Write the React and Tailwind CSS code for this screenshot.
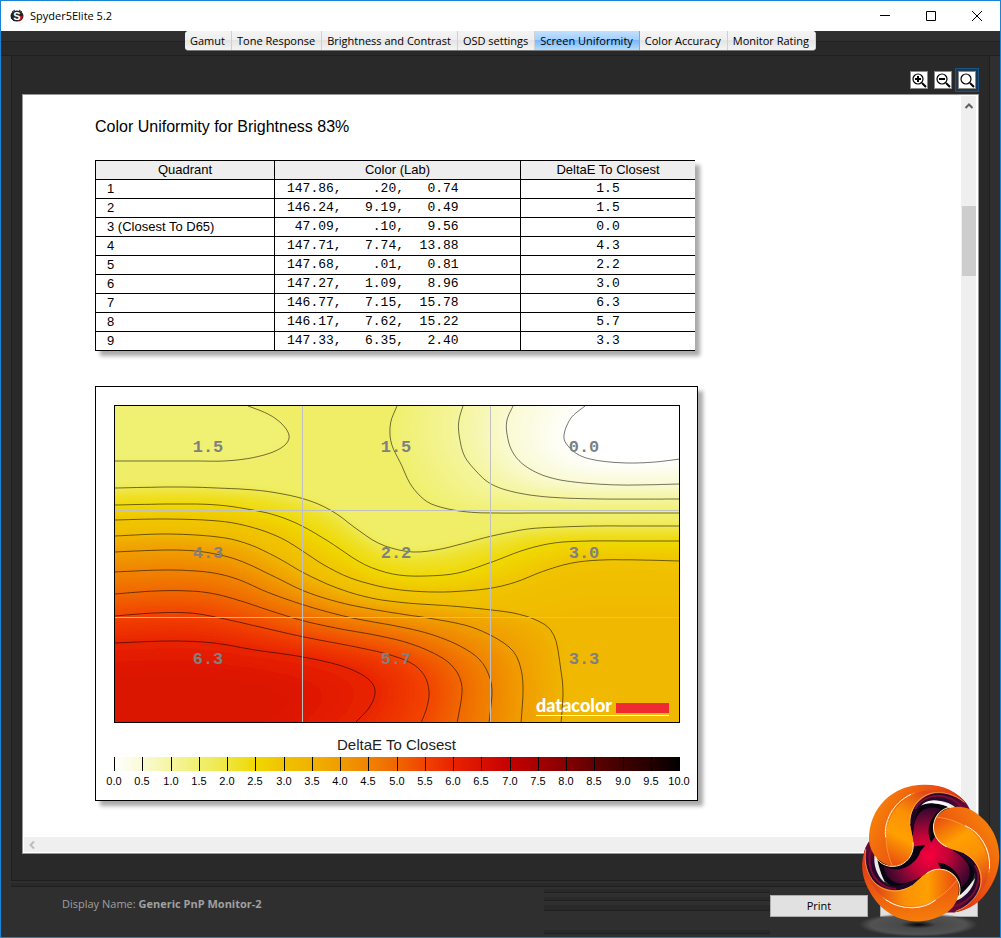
/**
 * Spyder5Elite report window, Screen Uniformity page.
 */

const TABS = ['Gamut', 'Tone Response', 'Brightness and Contrast', 'OSD settings', 'Screen Uniformity', 'Color Accuracy', 'Monitor Rating']

const ROWS = [
  ['1', '147.86,    .20,   0.74', '1.5'],
  ['2', '146.24,   9.19,   0.49', '1.5'],
  ['3 (Closest To D65)', ' 47.09,    .10,   9.56', '0.0'],
  ['4', '147.71,   7.74,  13.88', '4.3'],
  ['5', '147.68,    .01,   0.81', '2.2'],
  ['6', '147.27,   1.09,   8.96', '3.0'],
  ['7', '146.77,   7.15,  15.78', '6.3'],
  ['8', '146.17,   7.62,  15.22', '5.7'],
  ['9', '147.33,   6.35,   2.40', '3.3'],
]

// One colour for every 0.5 deltaE, 0 to 10
const SCALE = [
  [255, 255, 255], [250, 250, 214], [245, 245, 160], [240, 240, 112], [238, 230, 64], [240, 216, 0], [240, 194, 0],
  [240, 178, 0], [240, 156, 0], [240, 130, 0], [240, 102, 0], [242, 66, 0], [232, 34, 0], [216, 16, 0], [196, 0, 0],
  [166, 0, 0], [132, 0, 0], [94, 0, 0], [62, 0, 0], [36, 0, 0], [0, 0, 0],
]

// Contour lines on the 564 x 316 plot
const POCKET = [[0, 55], [40, 55], [80, 55], [109, 55], [136, 52], [158, 46], [171, 38], [174, 29], [167, 18], [153, 8], [133, 0]]
const COOL = [
  [1.5, [[282, 0], [276, 15], [275, 29], [278, 42], [286, 58], [296, 79], [311, 95], [329, 102], [353, 106], [379, 107], [430, 107], [500, 107], [565, 107]]],
  [1.0, [[348, 0], [344, 14], [344, 28], [349, 49], [361, 65], [376, 78], [399, 86], [433, 91], [486, 93], [565, 93]]],
  [0.5, [[398, 0], [392, 14], [392, 28], [397, 45], [409, 59], [430, 70], [459, 76], [506, 79], [565, 78]]],
  [0.0, [[470, 0], [456, 12], [449, 29], [453, 40], [466, 50], [486, 55], [513, 57], [540, 56], [565, 53]]],
]
const WARM = [
  [2.0, [[0, 82], [59, 81], [103, 82], [149, 85], [189, 93], [217, 105], [243, 124], [263, 137], [284, 144], [303, 146], [326, 143], [350, 137], [377, 130], [413, 123], [446, 121], [480, 120], [520, 120], [565, 120]]],
  [2.5, [[0, 99], [59, 98], [103, 99], [143, 105], [166, 111], [189, 121], [216, 137], [243, 155], [263, 164], [284, 169], [310, 170], [343, 167], [377, 156], [409, 144], [439, 137], [473, 135], [515, 135], [565, 135]]],
  [3.0, [[0, 114], [53, 113], [103, 115], [136, 121], [166, 132], [189, 146], [209, 159], [233, 171], [259, 179], [286, 184], [319, 186], [349, 185], [377, 182], [401, 176], [429, 165], [457, 157], [486, 154], [525, 154], [565, 155]]],
]
const HOT = [
  [3.5, [[0, 130], [53, 128], [103, 131], [133, 138], [163, 152], [189, 167], [222, 182], [256, 192], [292, 197], [336, 200], [377, 204], [403, 208], [421, 214], [434, 222], [441, 235], [445, 258], [448, 285], [446, 317]]],
  [4.0, [[0, 146], [53, 144], [89, 146], [123, 154], [156, 169], [189, 185], [223, 196], [256, 203], [286, 208], [319, 213], [353, 220], [379, 231], [398, 245], [406, 263], [408, 285], [406, 317]]],
  [4.5, [[0, 166], [50, 164], [92, 166], [122, 173], [152, 186], [189, 199], [233, 211], [286, 221], [315, 228], [343, 239], [363, 252], [373, 267], [377, 285], [374, 317]]],
  [5.0, [[0, 188], [40, 185], [75, 185], [100, 188], [126, 195], [156, 205], [189, 215], [226, 223], [260, 229], [290, 236], [314, 245], [333, 256], [344, 270], [347, 287], [342, 317]]],
  [5.5, [[0, 210], [40, 207], [75, 207], [105, 212], [145, 221], [189, 231], [236, 240], [272, 248], [296, 257], [309, 269], [314, 285], [312, 301], [306, 317]]],
  [6.0, [[0, 237], [56, 235], [99, 237], [140, 244], [182, 250], [220, 258], [244, 267], [257, 277], [260, 288], [254, 302], [240, 317]]],
  [6.4, [[0, 268], [50, 265], [99, 268], [136, 274], [165, 282], [176, 292], [172, 304], [155, 317]]],
]

function colorAt(value) {
  const pos = value * 2
  const i = Math.min(Math.floor(pos), SCALE.length - 2)
  const rgb = SCALE[i].map((c, k) => Math.round(c + (SCALE[i + 1][k] - c) * (pos - i)))
  return `rgb(${rgb.join(',')})`
}

// Catmull-Rom curve through the points, resampled to 81 evenly spaced ones
function sample(points) {
  const dense = []
  for (let i = 0; i < points.length - 1; i++) {
    const a = points[Math.max(i - 1, 0)]
    const b = points[i]
    const c = points[i + 1]
    const d = points[Math.min(i + 2, points.length - 1)]
    for (let s = 0; s < 16; s++) {
      const t = s / 16
      dense.push([0, 1].map(k => 0.5 * (2 * b[k] + (c[k] - a[k]) * t +
        (2 * a[k] - 5 * b[k] + 4 * c[k] - d[k]) * t * t +
        (3 * b[k] - a[k] - 3 * c[k] + d[k]) * t * t * t)))
    }
  }
  dense.push(points[points.length - 1])
  const run = [0]
  for (let i = 1; i < dense.length; i++) {
    run.push(run[i - 1] + Math.hypot(dense[i][0] - dense[i - 1][0], dense[i][1] - dense[i - 1][1]))
  }
  const out = []
  let j = 0
  for (let i = 0; i <= 80; i++) {
    const at = (run[run.length - 1] * i) / 80
    while (j < run.length - 2 && run[j + 1] < at) j++
    const t = (at - run[j]) / (run[j + 1] - run[j])
    out.push([0, 1].map(k => dense[j][k] + (dense[j + 1][k] - dense[j][k]) * t))
  }
  return out
}

const toPath = pts => 'M' + pts.map(p => `${p[0].toFixed(1)},${p[1].toFixed(1)}`).join('L')

// Filled steps between neighbouring contours; `close` finishes the outline outside the plot
function bands(family, close) {
  const curves = family.map(([level, pts]) => [level, sample(pts)])
  const out = []
  curves.forEach(([level, pts], i) => {
    const next = curves[i + 1]
    const steps = next ? 8 : 1
    for (let s = 0; s < steps; s++) {
      const t = s / steps
      const mixed = next ? pts.map((p, n) => [p[0] + (next[1][n][0] - p[0]) * t, p[1] + (next[1][n][1] - p[1]) * t]) : pts
      out.push({ d: toPath(mixed) + close, fill: colorAt(next ? level + (next[0] - level) * t : level) })
    }
  })
  return out
}

// Slow rise from 3.0 to 3.3 in the lower right
const PLATEAU = [1, 2, 3, 4, 5, 6, 7, 8].map(k => ({
  d: toPath(sample(WARM[2][1]).map(p => [p[0], p[1] + k * 7])) + 'L620,170L620,370L-60,370L-60,83Z',
  fill: colorAt(3 + k * 0.04),
}))

const FILLS = [
  ...bands(COOL, 'L620,108L620,-60L282,-60Z'),
  ...bands(WARM, 'L620,121L620,370L-60,370L-60,83Z'),
  ...PLATEAU,
  ...bands(HOT, 'L300,370L-60,370L-60,200Z'),
]
const LINES = [POCKET, ...COOL.map(c => c[1]), ...WARM.map(c => c[1]), ...HOT.slice(0, 6).map(c => c[1])]

function UniformityMap() {
  return (
    <svg viewBox="0 0 564 316" width="564" height="316" role="img" aria-label="DeltaE map" className="block">
      <defs>
        <filter id="soft" x="-10%" y="-10%" width="120%" height="120%">
          <feGaussianBlur stdDeviation="4" />
        </filter>
      </defs>
      <g filter="url(#soft)">
        <rect x="-60" y="-60" width="700" height="450" fill={colorAt(1.6)} />
        <path d={toPath(sample(POCKET)) + 'L134,-60L-60,-60L-60,56Z'} fill={colorAt(1.47)} />
        {FILLS.map((f, i) => <path key={i} d={f.d} fill={f.fill} />)}
      </g>
      {LINES.map((pts, i) => <path key={i} d={toPath(sample(pts))} fill="none" stroke="#000" strokeOpacity="0.55" />)}
      <path d="M187.5 0V316M375.5 0V316M0 104.5H564M0 211.5H564" stroke="#c0c0c0" fill="none" />
      {ROWS.map((row, i) => (
        <text key={row[0]} x={93 + (i % 3) * 188} y={46 + Math.floor(i / 3) * 106} textAnchor="middle"
          fill="#808080" className="font-['Liberation_Mono',monospace] text-[17px] font-bold">{row[2]}</text>
      ))}
      <text x="421" y="306" fill="#fff" className="font-['Lato',sans-serif] text-[18px] font-black">datacolor</text>
      <rect x="501" y="297" width="53" height="10" fill="#ef2b32" />
      <path d="M421 309.5H554" stroke="#fff" />
    </svg>
  )
}

function ColorScale() {
  return (
    <svg viewBox="0 0 602 34" width="602" height="34" role="img" aria-label="DeltaE scale" className="block">
      <defs>
        <linearGradient id="scale">
          {SCALE.map((c, i) => <stop key={i} offset={i / 20} stopColor={`rgb(${c.join(',')})`} />)}
        </linearGradient>
      </defs>
      <rect x="18" y="0" width="566" height="14" fill="url(#scale)" />
      {SCALE.map((c, i) => {
        const x = Math.round(18 + i * 28.25)
        return (
          <g key={i}>
            <rect x={x} y="0" width="1" height="14" fill="#000" />
            <text x={x} y="28" textAnchor="middle" className="font-['Liberation_Sans',sans-serif] text-[11px]">{(i / 2).toFixed(1)}</text>
          </g>
        )
      })}
    </svg>
  )
}

function Knot() {
  const turns = ['rotate(0 269 256)', 'rotate(120 269 256)', 'rotate(240 269 256)']
  return (
    <svg viewBox="0 0 483 504" aria-hidden="true" className="pointer-events-none absolute right-0 bottom-0 h-[168px] w-[161px]">
      <defs>
        <radialGradient id="core" gradientUnits="userSpaceOnUse" cx="262" cy="256" r="165">
          <stop offset="0" stopColor="#f8003c" />
          <stop offset="0.35" stopColor="#c00438" />
          <stop offset="0.7" stopColor="#5a0832" />
          <stop offset="1" stopColor="#12041c" />
        </radialGradient>
        <linearGradient id="rim" x1="0" y1="0.2" x2="1" y2="0.6">
          <stop offset="0" stopColor="#f88a08" />
          <stop offset="0.55" stopColor="#ea4c12" />
          <stop offset="1" stopColor="#d01c18" />
        </linearGradient>
        <linearGradient id="petal" x1="0.2" y1="1" x2="0.6" y2="0">
          <stop offset="0" stopColor="#ea5010" />
          <stop offset="0.35" stopColor="#ffa000" />
          <stop offset="0.65" stopColor="#fb9006" />
          <stop offset="1" stopColor="#e04a18" />
        </linearGradient>
        <linearGradient id="tube" x1="0" y1="0" x2="1" y2="0">
          <stop offset="0" stopColor="#1c0624" />
          <stop offset="0.6" stopColor="#2a0830" />
          <stop offset="1" stopColor="#7c0a34" />
        </linearGradient>
        <radialGradient id="ground">
          <stop offset="0" stopColor="#050505" />
          <stop offset="0.3" stopColor="#484848" />
          <stop offset="0.8" stopColor="#565656" stopOpacity="0.9" />
          <stop offset="1" stopColor="#565656" stopOpacity="0" />
        </radialGradient>
      </defs>
      <ellipse cx="238" cy="467" rx="178" ry="36" fill="url(#ground)" />
      <circle cx="269" cy="256" r="75" fill="url(#core)" />
      {turns.map(t => (
        <g key={t} transform={t}>
          <path d="M208 250C224 210 200 150 226 122C262 92 320 100 350 130L300 260Z" fill="#090210" />
          <path d="M206 266C232 215 212 170 240 134C256 116 284 110 306 122C262 146 258 206 290 240L300 270Z" fill="url(#core)" />
          <path d="M212 190C206 120 240 66 306 64C360 68 392 104 399 142L350 130C330 98 288 88 262 98C232 112 226 150 222 190Z" fill="url(#tube)" />
          <path d="M228 120C244 90 280 76 312 82C340 88 366 104 380 132" fill="none" stroke="#7c0a34" strokeWidth="6" />
          <path d="M262 100C290 88 335 96 360 126C330 112 300 104 262 100Z" fill="#fff" opacity="0.9" />
        </g>
      ))}
      {turns.map(t => (
        <g key={t} transform={t}>
          <path d="M90 215C88 115 162 47 255 47C312 46 354 66 384 106C352 78 310 64 272 73C235 85 212 120 213 165C218 200 229 215 219 250C208 282 180 294 155 291C116 281 94 250 90 215Z" fill="url(#rim)" />
          <path d="M160 290C122 205 140 104 244 68C262 62 290 62 310 68C246 72 212 118 213 165C218 200 229 215 219 250C206 282 180 292 160 290Z" fill="url(#petal)" />
          <path d="M160 290C122 205 140 104 226 72" fill="none" stroke="#f8a840" strokeWidth="2" />
          <path d="M140 205C134 160 158 104 216 76" fill="none" stroke="#fff3d8" strokeWidth="3" />
          <path d="M108 262C122 286 152 300 184 288C212 276 226 248 222 220" fill="none" stroke="#ffe9a0" strokeWidth="3" />
          <path d="M213 165C211 120 236 84 276 73C310 66 348 76 376 100" fill="none" stroke="#ffb850" strokeWidth="2" />
        </g>
      ))}
    </svg>
  )
}

function ZoomButton({ label, sign, active }) {
  return (
    <span className={`border p-[2px] ${active ? 'border-[#1b5488] bg-[#20384f]' : 'border-transparent'}`}>
      <button type="button" aria-label={label} className="block size-[18px] border border-[#8a8a8a] bg-white">
        <svg viewBox="0 0 16 16" className="size-4" fill="none" stroke="#000">
          <circle cx="7" cy="7" r="5" strokeWidth="1.2" />
          <path d="M11 11L15 15" strokeWidth="2" />
          {sign && <path d={sign} strokeWidth="2" />}
        </svg>
      </button>
    </span>
  )
}

function Report() {
  return (
    <main className="min-w-0 flex-1 overflow-hidden pt-[19px] pl-[71px] font-['Liberation_Sans',Arial,sans-serif] text-black">
      <h1 className="text-[16px] leading-6">Color Uniformity for Brightness 83%</h1>
      <table className="mt-[21px] w-[600px] table-fixed border-collapse border-y border-l border-black bg-white text-[13px] leading-[18px] shadow-[5px_5px_4px_#aaa]">
        <colgroup>
          <col className="w-[179px]" />
          <col className="w-[246px]" />
          <col />
        </colgroup>
        <thead className="bg-[#eee]">
          <tr>
            <th className="border-r border-black p-0 font-normal">Quadrant</th>
            <th className="border-r border-black p-0 font-normal">Color (Lab)</th>
            <th className="p-0 font-normal">DeltaE To Closest</th>
          </tr>
        </thead>
        <tbody className="font-['Liberation_Mono',monospace]">
          {ROWS.map(([name, lab, delta]) => (
            <tr key={name} className="border-t border-black">
              <td className="border-r border-black p-0 pl-[11px] font-['Liberation_Sans',Arial,sans-serif]">{name}</td>
              <td className="border-r border-black p-0 pl-3 whitespace-pre">{lab}</td>
              <td className="p-0 text-center">{delta}</td>
            </tr>
          ))}
        </tbody>
      </table>
      <figure className="mt-[35px] w-[603px] border border-black bg-white shadow-[5px_5px_4px_#aaa]">
        <div className="mx-[18px] mt-[18px] w-[566px] border border-black">
          <UniformityMap />
        </div>
        <figcaption className="mt-[12px] mb-[2px] text-center text-[15px] leading-5 text-[#222]">DeltaE To Closest</figcaption>
        <ColorScale />
        <div className="h-[9px]" />
      </figure>
    </main>
  )
}

export default function App() {
  return (
    <div className="relative flex min-h-screen flex-col border border-[#1883d7] bg-[#2f2f2f] font-['Open_Sans','Segoe_UI',sans-serif] text-[11px]">
      <header className="flex h-[30px] items-center bg-white pl-[9px] text-black">
        <svg viewBox="0 0 14 14" className="size-[14px]" aria-hidden="true">
          <ellipse cx="7" cy="7" rx="6.5" ry="5.5" fill="#222" />
          <path d="M8 7H13L12 11L8 12Z" fill="#a01028" />
          <path d="M2 3L5 1M9 1L12 3M1 9L4 12" stroke="#222" />
          <text x="7" y="11" textAnchor="middle" fill="#fff" className="font-['Liberation_Sans',sans-serif] text-[11px] font-bold">S</text>
        </svg>
        <span className="ml-1.5 flex-1">Spyder5Elite 5.2</span>
        <div className="flex">
          <button type="button" aria-label="Minimize" className="flex h-[30px] w-[46px] items-center justify-center">
            <svg viewBox="0 0 10 10" className="size-[10px]" stroke="#000" fill="none"><path d="M0 4.5H10" /></svg>
          </button>
          <button type="button" aria-label="Maximize" className="flex h-[30px] w-[46px] items-center justify-center">
            <svg viewBox="0 0 10 10" className="size-[10px]" stroke="#000" fill="none"><path d="M0.5 0.5H9.5V9.5H0.5Z" /></svg>
          </button>
          <button type="button" aria-label="Close window" className="flex h-[30px] w-[46px] items-center justify-center">
            <svg viewBox="0 0 10 10" className="size-[10px]" stroke="#000" fill="none"><path d="M0 0L10 10M10 0L0 10" /></svg>
          </button>
        </div>
      </header>

      <nav className="flex h-[25px] items-start justify-center bg-[linear-gradient(#2f2f2f_10px,#212121_10px,#212121_11px,#292929_11px,#292929_24px,#202020_24px)]">
        <div className="flex h-5 overflow-hidden rounded border-b border-[#777] bg-[#eee]">
          {TABS.map(tab => (
            <button key={tab} type="button" className={`border-r pr-1.5 pl-[5px] leading-[19px] whitespace-nowrap text-black ${
              tab === 'Screen Uniformity'
                ? 'border-[#6aaef5] bg-[linear-gradient(#c2e0ff,#a5d0ff_45%,#7ab8fb_50%,#b5dcff)]'
                : 'border-[#d0d0d0] bg-[linear-gradient(#f4f4f4,#efefef_45%,#e4e4e4_50%,#f4f4f4)]'
            }`}>{tab}</button>
          ))}
        </div>
      </nav>

      <div className="mx-[10px] flex flex-1 flex-col border-x border-b border-[#1f1f1f] bg-[#292929] px-[10px] pb-[26px]">
        <div className="flex h-[38px] items-center justify-end pt-[10px]">
          <ZoomButton label="Zoom in" sign="M4 7H10M7 4V10" />
          <ZoomButton label="Zoom out" sign="M4 7H10" />
          <ZoomButton label="Actual size" active />
        </div>
        <div className="flex flex-1 flex-col border border-[#969696] bg-white p-px">
          <div className="flex flex-1 pr-px">
            <Report />
            <div className="flex w-[15px] flex-col items-center bg-[#efefef] pt-1.5">
              <svg viewBox="0 0 10 8" className="h-2 w-[10px]" fill="none" stroke="#606060" strokeWidth="2"><path d="M1.500 6L5 2.500L8.500 6" /></svg>
              <div className="mt-24 h-[70px] w-[14px] bg-[#cdcdcd]" />
            </div>
          </div>
          <div className="flex h-[15px] items-center bg-[#efefef] pl-1">
            <svg viewBox="0 0 8 10" className="h-[10px] w-2" fill="none" stroke="#bdbdbd" strokeWidth="2"><path d="M6 1.500L2.500 5L6 8.500" /></svg>
          </div>
        </div>
      </div>

      <footer className="mx-[10px]">
        <div className="mt-[2px] h-1 border-b border-[#1f1f1f] bg-[#292929]" />
        <div className="flex h-[50px] items-start">
          <p className="flex-1 pt-[9px] pl-[51px] text-[#a0a0a0]">Display Name: <b className="font-bold">Generic PnP Monitor-2</b></p>
          <div className="mt-[2px] w-[226px]">
            <div className="h-1 border-b border-[#202020] bg-[#292929]" />
            <div className="mt-1 h-1 border-b border-[#202020] bg-[#292929]" />
            <div className="mt-1 h-1.5 border-b border-[#202020] bg-[#292929]" />
            <div className="mt-[19px] h-1 border-b border-[#202020] bg-[#292929]" />
          </div>
          <button type="button" className="mt-2 h-[22px] w-[98px] border border-[#adadad] bg-[#e1e1e1] text-black">Print</button>
          <button type="button" aria-label="Close" className="mt-2 mr-3 ml-3 h-[22px] w-[98px] border border-[#adadad] bg-[#e1e1e1]" />
        </div>
      </footer>
      <Knot />
    </div>
  )
}
